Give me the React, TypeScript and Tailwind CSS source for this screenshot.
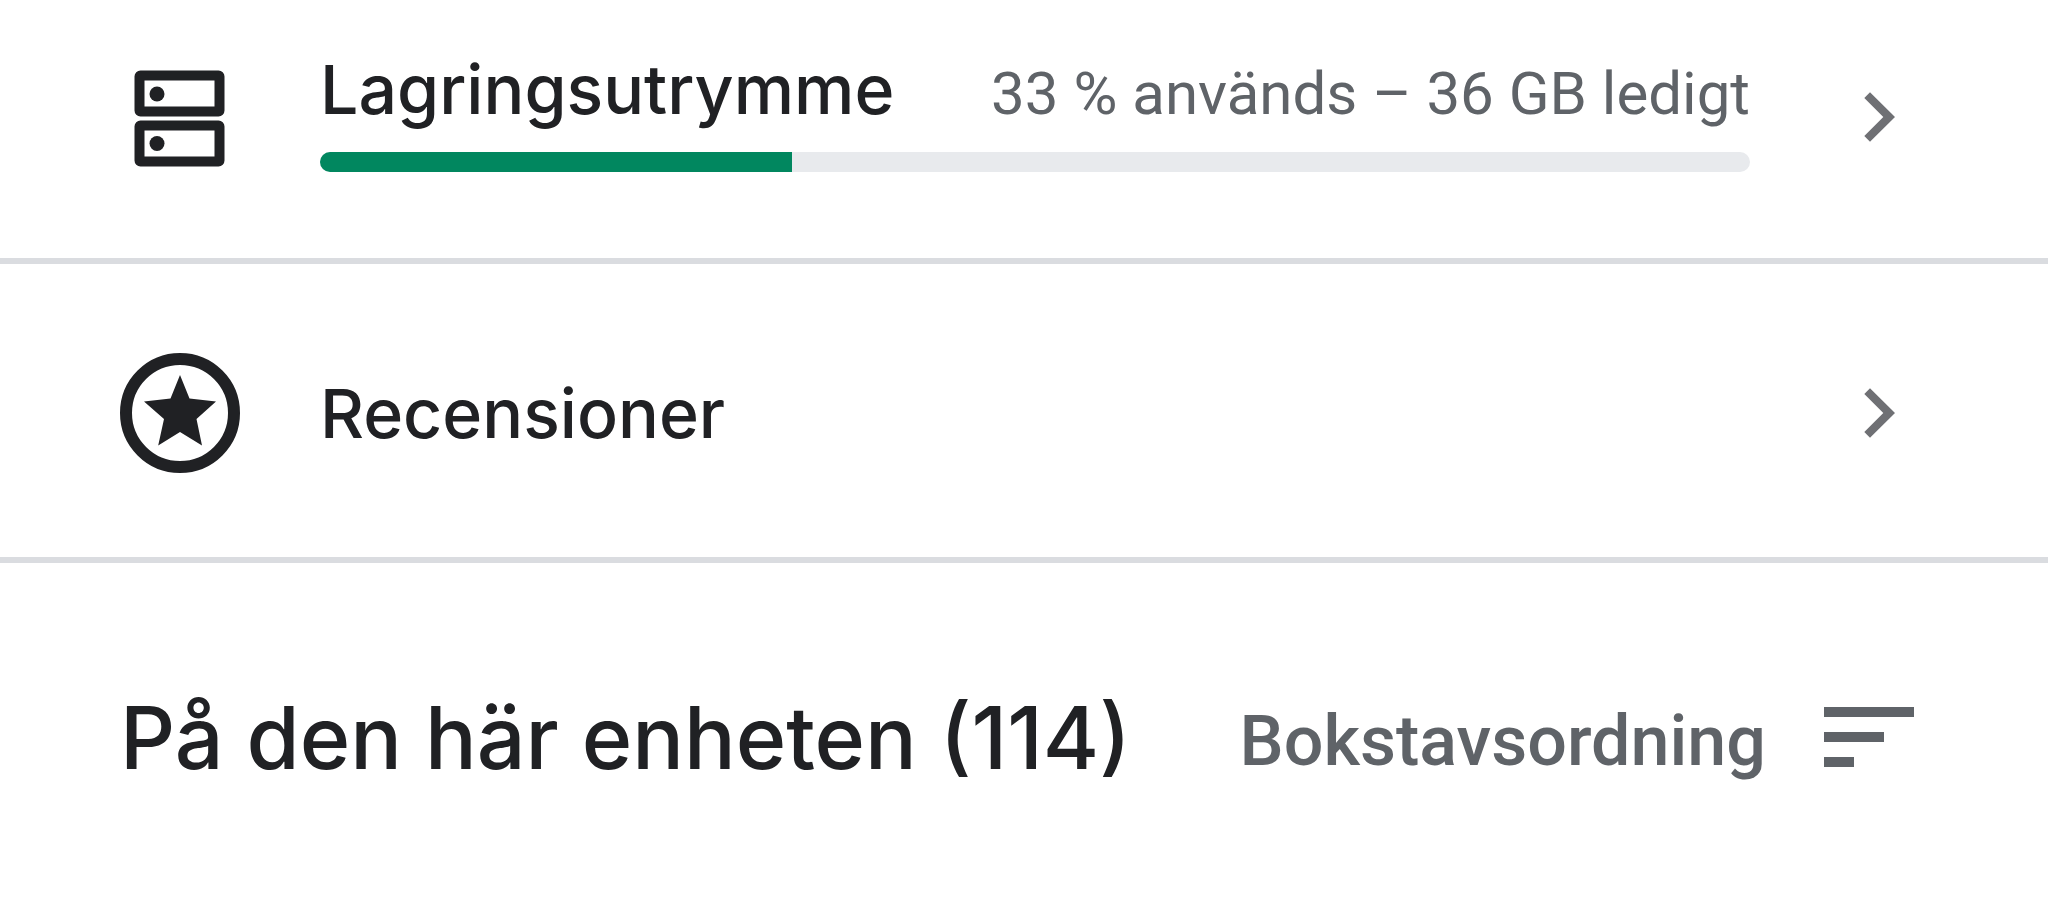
import type { ReactNode } from 'react';

const StorageIcon = () => (
  <svg viewBox="0 0 120 120" className="w-[120px] h-[120px] shrink-0" fill="none" stroke="currentColor" aria-hidden="true">
    <rect x="19.5" y="18.5" width="80" height="36" rx="1" strokeWidth="10" />
    <rect x="19.5" y="68.5" width="80" height="36" rx="1" strokeWidth="10" />
    <circle cx="37" cy="37" r="7.5" fill="currentColor" stroke="none" />
    <circle cx="37" cy="86.5" r="7.5" fill="currentColor" stroke="none" />
  </svg>
);

const ReviewsIcon = () => (
  <svg viewBox="0 0 120 120" className="w-[120px] h-[120px] shrink-0" aria-hidden="true">
    <circle cx="60" cy="60" r="54" fill="none" stroke="currentColor" strokeWidth="12" />
    <path
      d="M60 22L50.5 45.5L24 48.5L44 66L38.2 92.5L60 79L82 92.5L76.5 66L96 48.5L69.5 45.5Z"
      fill="currentColor"
    />
  </svg>
);

const ChevronIcon = () => (
  <svg viewBox="0 0 120 120" className="w-[120px] h-[120px] shrink-0 text-[#6f7074]" aria-hidden="true">
    <path d="M60 35.3L85 60L60 84.7L54.3 79L73.3 60L54.3 41Z" fill="currentColor" />
  </svg>
);

const SortIcon = () => (
  <svg viewBox="0 0 90 68" className="w-[90px] h-[68px] shrink-0" fill="currentColor" aria-hidden="true">
    <path d="M0 0H90V10H0ZM0 25H60V35H0ZM0 50H30V60H0Z" />
  </svg>
);

interface RowProps {
  href: string;
  icon: ReactNode;
  className: string;
  children: ReactNode;
}

const Row = ({ href, icon, className, children }: RowProps) => (
  <a href={href} className={`flex items-center pl-[120px] pr-[118px] border-b-6 border-[#dadce0] ${className}`}>
    {icon}
    <div className="flex-1 min-w-0 ml-20 mr-15">{children}</div>
    <ChevronIcon />
  </a>
);

const App = () => {
  const usedPercent = 33;

  return (
    <main className="min-h-screen bg-white text-[#202124] font-['Inter',sans-serif]">
      <Row href="#storage" icon={<StorageIcon />} className="pt-[49px] pb-[74px]">
        <div className="pb-3">
          <div className="flex items-baseline justify-between whitespace-nowrap">
            <span className="text-[68px] leading-[80px] font-medium">Lagringsutrymme</span>
            <span className="text-[60px] leading-[80px] text-[#5f6368] font-['Roboto',sans-serif]">
              {usedPercent} % används – 36 GB ledigt
            </span>
          </div>
          <div
            role="progressbar"
            aria-label="Lagringsutrymme"
            aria-valuenow={usedPercent}
            aria-valuemin={0}
            aria-valuemax={100}
            className="h-5 mt-[18px] rounded-full overflow-hidden bg-[#e8eaed]"
          >
            <div className="h-full bg-[#01875f]" style={{ width: `${usedPercent}%` }} />
          </div>
        </div>
      </Row>

      <Row href="#reviews" icon={<ReviewsIcon />} className="pt-[89px] pb-[84px]">
        <span className="text-[68px] leading-[80px] font-medium">Recensioner</span>
      </Row>

      <section className="flex items-center justify-between pt-[125px] pl-[120px] pr-[134px] whitespace-nowrap">
        <h1 className="text-[86px] leading-[100px] font-medium">På den här enheten (114)</h1>
        <button
          type="button"
          className="flex items-center gap-[58px] pt-[6px] text-[70px] leading-[80px] font-medium text-[#5f6368] font-['Roboto',sans-serif]"
        >
          Bokstavsordning
          <SortIcon />
        </button>
      </section>
    </main>
  );
};

export default App;
